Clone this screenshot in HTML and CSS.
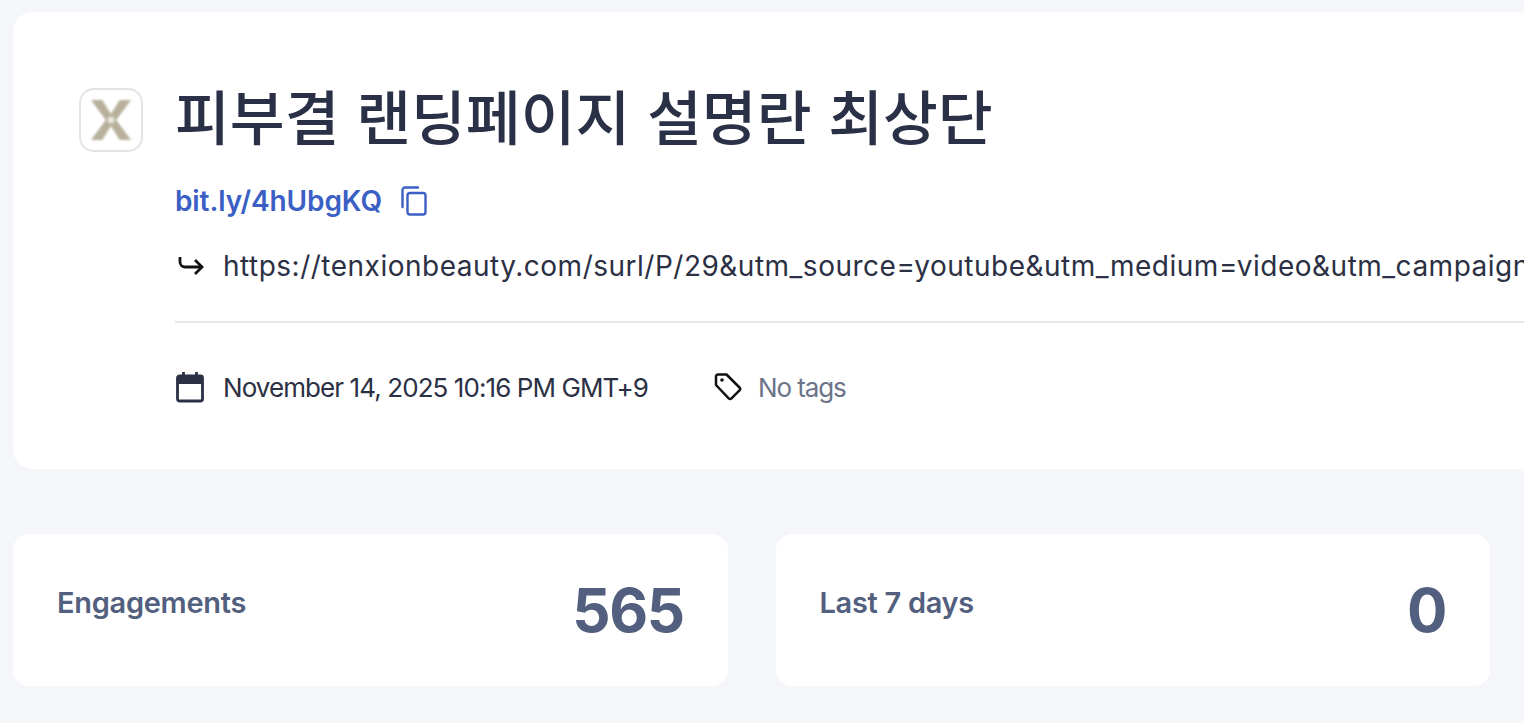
FILE: index.html
```html
<!DOCTYPE html>
<html lang="ko">
<head>
<meta charset="utf-8">
<title>Link details</title>
<link rel="stylesheet" href="styles.css">
</head>
<body>
<main class="page">
  <section class="card">
    <div class="logo">
      <svg viewBox="0 0 62 62" width="54" height="54" aria-hidden="true">
        <defs><filter id="soft" x="-20%" y="-20%" width="140%" height="140%"><feGaussianBlur stdDeviation="1.2"/></filter></defs>
        <path filter="url(#soft)" fill="#b8b09a" d="M8 8h13l10 16 10-16h13L37 31l17 23H41l-10-16-10 16H8l17-23z"/>
        <circle cx="31" cy="31" r="4" fill="#e8e5dc" filter="url(#soft)"/>
      </svg>
    </div>
    <div class="details">
      <h1 class="title">피부결 랜딩페이지 설명란 최상단</h1>
      <div class="short">
        <a class="short-link">bit.ly/4hUbgKQ</a>
        <svg class="copy" viewBox="0 0 26 30" width="26" height="30" fill="none" stroke="#3b5fc4" stroke-width="2.4" aria-hidden="true">
          <path d="M1.500 21V4a2.500 2.500 0 0 1 2.500-2.500h13" stroke-linecap="round"/>
          <rect x="6.500" y="7" width="18" height="21.500" rx="2.500"/>
        </svg>
      </div>
      <div class="dest">
        <svg class="arrow" viewBox="0 0 26 20" width="26" height="20" fill="none" stroke="#111" stroke-width="2.8" aria-hidden="true">
          <path d="M2 1v5a5 5 0 0 0 5 5h16"/>
          <path d="M17 4l7 7-7 7"/>
        </svg>
        <span class="dest-url">https://tenxionbeauty.com/surl/P/29&amp;utm_source=youtube&amp;utm_medium=video&amp;utm_campaign</span>
      </div>
      <hr class="rule">
      <div class="meta">
        <div class="meta-item">
          <svg viewBox="0 0 30 32" width="30" height="32" fill="none" stroke="#2b3044" stroke-width="2.8" aria-hidden="true">
            <rect x="2.500" y="5" width="25" height="25" rx="2"/>
            <path d="M2.500 9.500h25" stroke-width="7"/>
            <path d="M8.500 1v5M21.500 1v5"/>
          </svg>
          <span class="date">November 14, 2025 10:16 PM GMT+9</span>
        </div>
        <div class="meta-item tags">
          <svg viewBox="0 0 28 28" width="28" height="28" fill="none" stroke="#111" stroke-width="2.500" stroke-linejoin="round" aria-hidden="true">
            <path d="M2 3.500a2 2 0 0 1 2-2h8.500l13 13a2 2 0 0 1 0 2.800l-8 8a2 2 0 0 1-2.800 0L2 12z"/>
            <circle cx="8" cy="7" r="1.800" fill="#111" stroke="none"/>
          </svg>
          <span class="no-tags">No tags</span>
        </div>
      </div>
    </div>
  </section>
  <section class="stats">
    <div class="stat">
      <span class="stat-label">Engagements</span>
      <span class="stat-value">565</span>
    </div>
    <div class="stat">
      <span class="stat-label">Last 7 days</span>
      <span class="stat-value">0</span>
    </div>
  </section>
</main>
</body>
</html>
```

FILE: styles.css
```css
* { box-sizing: border-box; }
html, body { margin: 0; height: 100%; overflow: hidden; }
body {
  background: #f4f6fa;
  font-family: Inter, "Noto Sans CJK KR", sans-serif;
  color: #2b3044;
}
.page { width: 1700px; padding: 12px 0 0 13px; }
.card {
  display: flex;
  gap: 32px;
  height: 457px;
  padding: 76px 0 0 66px;
  background: #fff;
  border-radius: 20px;
}
.logo {
  flex: none;
  display: flex;
  align-items: center;
  justify-content: center;
  width: 64px;
  height: 64px;
  border: 2px solid #e2e3e5;
  border-radius: 15px;
}
.details { flex: 1; min-width: 0; }
.title {
  margin: 0;
  font-family: "Noto Sans CJK KR", sans-serif;
  font-size: 59.6px;
  font-weight: 500;
  line-height: 52px;
  color: #2a3147;
  white-space: nowrap;
}
.short { display: flex; align-items: center; gap: 19px; margin-top: 44px; height: 34px; }
.short-link {
  font-size: 28px;
  font-weight: 600;
  letter-spacing: -0.1px;
  color: #3b5fc4;
}
.dest { display: flex; align-items: center; gap: 19px; margin-top: 31px; height: 34px; padding-left: 3px; }
.arrow { flex: none; }
.dest-url { font-size: 28px; letter-spacing: 0.5px; color: #2b3044; white-space: nowrap; }
.rule { margin: 38px 0 0; border: 0; border-top: 2px solid #e5e7ea; }
.meta { display: flex; align-items: center; gap: 66px; margin-top: 48px; }
.meta-item { display: flex; align-items: center; gap: 18px; }
.tags { gap: 16px; }
.date { font-size: 26px; letter-spacing: -0.92px; color: #2b3044; }
.no-tags { font-size: 26px; letter-spacing: -1.1px; color: #6b7488; }
.stats { display: flex; gap: 48px; margin-top: 65px; }
.stat {
  display: flex;
  justify-content: space-between;
  align-items: flex-start;
  width: 714.5px;
  height: 152px;
  padding: 44px 44px 0;
  background: #fff;
  border-radius: 16px;
}
.stat-label { font-size: 29px; font-weight: 600; letter-spacing: -0.3px; color: #535f7e; line-height: 50px; }
.stat-value { font-size: 60px; font-weight: 700; letter-spacing: -1.5px; color: #535f7e; line-height: 64px; }
```
